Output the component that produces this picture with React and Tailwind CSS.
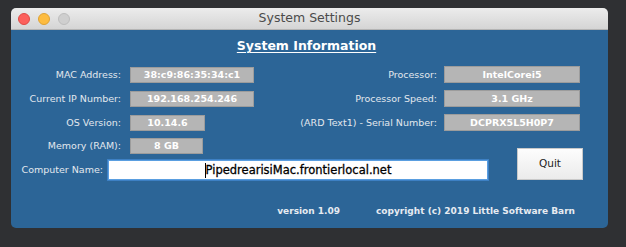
export default function App() {
  const font = { fontFamily: '"DejaVu Sans", "Noto Sans", sans-serif' };
  const box =
    "h-[16px] bg-[#b5b5b5] border border-[#9c9c9c] text-white text-[9.5px] font-bold flex items-center justify-center leading-none";
  const label = "text-[9.5px] text-[#e3e8ee] text-right leading-none";
  return (
    <div className="w-[626px] h-[247px] bg-[#2f3033] pt-[8px] pl-[11px]" style={font}>
      <div className="w-[597px] h-[220px] rounded-[5px] overflow-hidden flex flex-col">
        <div className="relative h-[22px] shrink-0 bg-gradient-to-b from-[#ececec] to-[#d5d5d5] border-b border-[#b4b4b4] flex items-center">
          <div className="flex items-center gap-[8px] pl-[7px]">
            <div className="w-[12px] h-[12px] rounded-full bg-[#fc605c] border border-[#de4a45]" />
            <div className="w-[12px] h-[12px] rounded-full bg-[#fdbc40] border border-[#dea234]" />
            <div className="w-[12px] h-[12px] rounded-full bg-[#cfcfcf] border border-[#bdbdbd]" />
          </div>
          <div className="absolute inset-0 flex items-center justify-center text-[12.5px] text-[#4b4b4b]">
            System Settings
          </div>
        </div>
        <div className="flex-1 bg-[#2c6597] flex flex-col pt-[7px]">
          <div className="h-[17px] leading-[17px] text-center text-white text-[12.5px] font-bold underline underline-offset-[2px] decoration-[1px] pr-[6px]">
            System Information
          </div>
          <div className="mt-[12px] grid grid-cols-[286px_211px_100px] grid-rows-[17px_17px_17px_15px_20px] gap-y-[7px]">
            <div className="flex items-center">
              <div className={`w-[110px] ${label}`}>MAC Address:</div>
              <div className={`ml-[9px] w-[124px] ${box}`}>38:c9:86:35:34:c1</div>
            </div>
            <div className="col-span-2 flex items-center">
              <div className={`w-[140px] ${label}`}>Processor:</div>
              <div className={`ml-[7px] w-[136px] h-[17px] ${box}`}>IntelCorei5</div>
            </div>
            <div className="flex items-center">
              <div className={`w-[110px] ${label}`}>Current IP Number:</div>
              <div className={`ml-[9px] w-[124px] ${box}`}>192.168.254.246</div>
            </div>
            <div className="col-span-2 flex items-center">
              <div className={`w-[140px] ${label}`}>Processor Speed:</div>
              <div className={`ml-[7px] w-[136px] h-[17px] ${box}`}>3.1 GHz</div>
            </div>
            <div className="flex items-center">
              <div className={`w-[110px] ${label}`}>OS Version:</div>
              <div className={`ml-[9px] w-[75px] ${box}`}>10.14.6</div>
            </div>
            <div className="col-span-2 flex items-center">
              <div className={`w-[140px] ${label} whitespace-nowrap`}>(ARD Text1) - Serial Number:</div>
              <div className={`ml-[7px] w-[136px] h-[17px] ${box}`}>DCPRX5L5H0P7</div>
            </div>
            <div className="col-span-2 flex items-center">
              <div className={`w-[110px] ${label}`}>Memory (RAM):</div>
              <div className={`ml-[9px] w-[73px] ${box}`}>8 GB</div>
            </div>
            <div className="row-span-2 flex items-end">
              <div className="ml-[9px] w-[66px] h-[32px] bg-gradient-to-b from-[#fdfdfd] to-[#ebebeb] border border-[#c9c9c9] flex items-center justify-center text-[10.5px] text-[#222]">
                Quit
              </div>
            </div>
            <div className="col-span-2 flex items-center">
              <div className={`w-[92px] ${label}`}>Computer Name:</div>
              <div className="ml-[5px] w-[380px] h-[20px] bg-white border border-[#5a9ee0] shadow-[0_0_0_1px_#3d80c4] flex items-center justify-center text-[11.5px] text-black [-webkit-text-stroke:0.3px_black]">
                <span className="relative pl-[1px] leading-[13px]">
                  <span className="absolute left-0 top-[-1px] bottom-[-1px] w-[1px] bg-black" />
                  PipedrearisiMac.frontierlocal.net
                </span>
              </div>
            </div>
          </div>
          <div className="mt-[24px] flex justify-end pr-[33px] gap-[36px] text-[9px] font-bold text-[#e6ebf1] leading-[14px]">
            <span>version 1.09</span>
            <span>copyright (c) 2019 Little Software Barn</span>
          </div>
        </div>
      </div>
    </div>
  );
}
